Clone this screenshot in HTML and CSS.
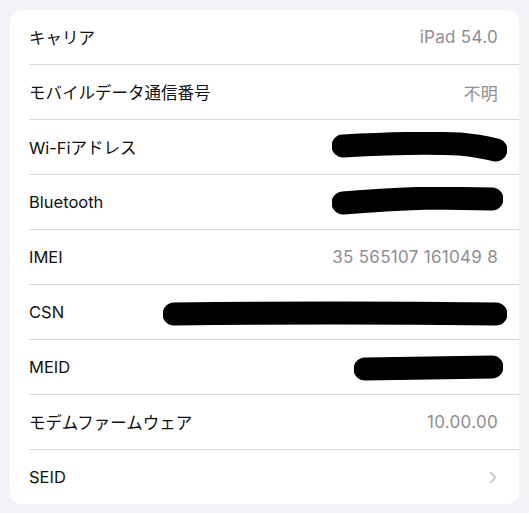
FILE: index.html
```html
<!DOCTYPE html>
<html lang="ja">
<head>
  <meta charset="UTF-8" />
  <meta name="viewport" content="width=device-width, initial-scale=1.0"/>
  <title>情報</title>
  <link rel="stylesheet" href="styles.css">
</head>
<body>
  <div class="group">
    <div class="row">
      <span class="label">キャリア</span>
      <span class="value">iPad 54.0</span>
    </div>
    <div class="row">
      <span class="label">モバイルデータ通信番号</span>
      <span class="value">不明</span>
    </div>
    <div class="row">
      <span class="label">Wi-Fiアドレス</span>
      <svg class="redact redact-wifi" width="175" height="30" viewBox="0 0 175 30">
        <path d="M11 14 Q 80 10 128 12 Q 148 14 164 18" />
      </svg>
    </div>
    <div class="row">
      <span class="label">Bluetooth</span>
      <svg class="redact redact-bt" width="171" height="30" viewBox="0 0 171 30">
        <path d="M11 16 Q 60 12 100 11 L 160 12" />
      </svg>
    </div>
    <div class="row">
      <span class="label">IMEI</span>
      <span class="value">35 565107 161049 8</span>
    </div>
    <div class="row">
      <span class="label">CSN</span>
      <svg class="redact redact-csn" width="344" height="30" viewBox="0 0 344 30">
        <path d="M11 17 Q 170 15 333 17" />
      </svg>
    </div>
    <div class="row">
      <span class="label">MEID</span>
      <svg class="redact redact-meid" width="149" height="30" viewBox="0 0 149 30">
        <path d="M11 17 L 138 15" />
      </svg>
    </div>
    <div class="row">
      <span class="label">モデムファームウェア</span>
      <span class="value">10.00.00</span>
    </div>
    <div class="row row-link">
      <span class="label">SEID</span>
      <svg class="chevron" width="8" height="13" viewBox="0 0 8 13">
        <path d="M1.5 1.5 L6.5 6.5 L1.5 11.5" />
      </svg>
    </div>
  </div>
</body>
</html>
```

FILE: styles.css
```css
body {
  margin: 0;
  padding: 10px;
  background: #f2f2f7;
  font-family: Inter, "Noto Sans CJK JP", sans-serif;
  -webkit-font-smoothing: antialiased;
}
.group {
  background: #fff;
  border-radius: 12px;
  overflow: hidden;
}
.row {
  display: flex;
  align-items: center;
  justify-content: space-between;
  height: 54px;
  margin-left: 19px;
  padding-right: 21px;
  border-bottom: 1px solid #d8d8dc;
}
.row:last-child {
  border-bottom: none;
}
.label {
  font-size: 16.5px;
  color: #111;
}
.value {
  font-size: 17px;
  letter-spacing: 0.3px;
  color: #8e8e93;
}
.redact path {
  fill: none;
  stroke: #000;
  stroke-width: 23;
  stroke-linecap: round;
  stroke-linejoin: round;
}
.redact-wifi { margin-right: -9px; }
.redact-bt { margin-right: -5px; }
.redact-csn { margin-right: -9px; }
.redact-meid { margin-right: -5px; }
.chevron {
  margin-right: 1px;
}
.chevron path {
  fill: none;
  stroke: #c4c4c7;
  stroke-width: 1.6;
  stroke-linecap: round;
  stroke-linejoin: round;
}
```
